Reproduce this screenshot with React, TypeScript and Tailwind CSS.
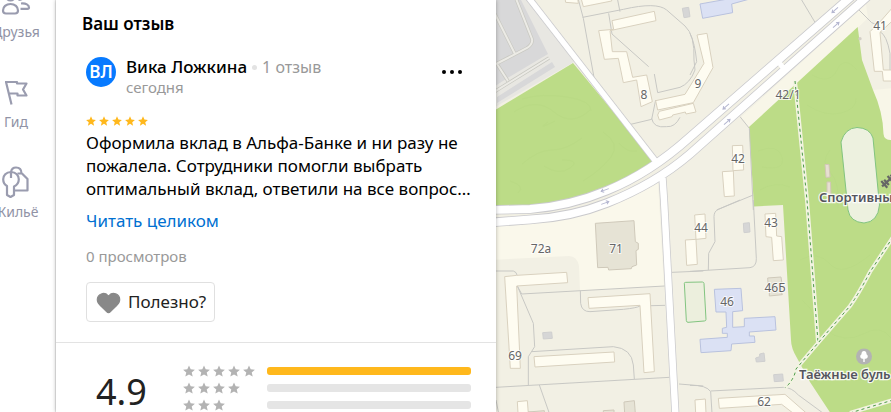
import { Heart } from "lucide-react";
import type { ReactNode } from "react";

const STAR = "M6 0.4 7.7 4.3 11.9 4.7 8.7 7.5 9.7 11.6 6 9.4 2.3 11.6 3.3 7.5 0.1 4.7 4.3 4.3Z";

function Star({ className }: { className: string }) {
  return (
    <svg viewBox="0 0 12 12" className={className} fill="currentColor" aria-hidden="true">
      <path d={STAR} />
    </svg>
  );
}

function NavItem({ label, children }: { label: string; children: ReactNode }) {
  return (
    <a href="#" className="flex h-[90px] w-8 flex-col items-center gap-1 whitespace-nowrap text-[#9a9caf]">
      <svg viewBox="0 0 32 32" className="size-8 shrink-0" fill="none" stroke="currentColor" strokeWidth="2.200" strokeLinejoin="round" aria-hidden="true">
        {children}
      </svg>
      <span className="text-sm leading-5 text-[#9193a6]">{label}</span>
    </a>
  );
}

function Sidebar() {
  return (
    <nav className="h-full w-14 shrink-0 overflow-hidden border-r border-[#ebebeb] bg-white">
      <div className="-mt-[14px]">
        <NavItem label="Друзья">
          <circle cx="10.500" cy="10" r="4.500" />
          <path d="M3 24.500C3 21 6 18 10.500 18S18 21 18 24.500C18 26.500 17 27.500 15 27.500H6C4 27.500 3 26.500 3 24.500Z" />
          <path d="M18 6C24 5 26 14 18.500 14M21 17.500C26 17 29 19 29 21.500 29 22.500 28.500 22.800 27.500 22.800H20.500" />
        </NavItem>
        <NavItem label="Гид">
          <path d="M5 6H17V7.500H26.500L23 13.500 26.500 19.500H17.500V17.500H8.500M6 6 11.500 28.500" />
        </NavItem>
        <NavItem label="Жильё">
          <path d="M11 6C6 6 3.200 9.500 3.200 13.200 3.200 16 4.500 18.500 7 20V29L10.500 31 14 29V20.500C17 19 18.800 16.500 18.800 13.200 18.800 9.500 16 6 11 6Z" />
          <path d="M11 6V12" />
          <path d="M11 6C11.500 3 13.500 1.500 16 1.500 19.500 1.500 21.500 4 21.500 7.500M17.500 7.500H22L27.500 13V24.500H15" />
        </NavItem>
      </div>
    </nav>
  );
}

function Review() {
  return (
    <article className="px-[30px] pt-[13px]">
      <header className="flex items-start">
        <div className="mt-2 flex size-[30px] shrink-0 items-center justify-center rounded-full bg-[#077aff] text-[17px] font-semibold text-white">
          ВЛ
        </div>
        <div className="ml-[10px] mt-2 flex-1">
          <div className="flex items-center text-[17px] leading-5">
            <a href="#" className="font-medium text-black">Вика Ложкина</a>
            <span className="mx-[5px] size-[5px] rounded-full bg-[#e3e3e3]" />
            <span className="text-base leading-5 text-[#999]">1 отзыв</span>
          </div>
          <p className="text-[15px] leading-5 text-[#999]">сегодня</p>
        </div>
        <button type="button" aria-label="Действия" className="mr-1 mt-5 flex gap-1 py-[1px]">
          <span className="size-1 rounded-full bg-black" />
          <span className="size-1 rounded-full bg-black" />
          <span className="size-1 rounded-full bg-black" />
        </button>
      </header>
      <div className="mt-[19px] flex gap-[3px] text-[#ffb81c]">
        {[1, 2, 3, 4, 5].map((n) => (
          <Star key={n} className="size-[10px]" />
        ))}
      </div>
      <p className="mt-[5px] whitespace-nowrap text-[17px] leading-[23px] text-black">
        Оформила вклад в Альфа-Банке и ни разу не
        <br />
        пожалела. Сотрудники помогли выбрать
        <br />
        оптимальный вклад, ответили на все вопрос…
      </p>
      <a href="#" className="mt-[9px] block text-[17px] leading-[23px] text-[#0070d1]">Читать целиком</a>
      <p className="mt-[14px] text-[15px] leading-5 text-[#999]">0 просмотров</p>
      <button type="button" className="mt-4 flex h-10 items-center gap-[6px] rounded-[4px] border border-[#e0e0e0] px-2 text-[17px] text-[#222]">
        <Heart className="size-[27px] fill-[#888] text-[#888]" strokeWidth={1} />
        Полезно?
      </button>
    </article>
  );
}

function Rating() {
  const rows = [
    { stars: 5, bar: "bg-[#ffb81c]" },
    { stars: 4, bar: "bg-[#e5e5e5]" },
    { stars: 3, bar: "bg-[#e5e5e5]" },
  ];
  return (
    <section className="mt-5 flex border-t border-[#e3e3e3] pl-10 pr-[25px] pt-[19px]">
      <p className="w-[87px] pt-[10px] text-[36px] leading-10 text-[#222]">4.9</p>
      <ul className="flex-1">
        {rows.map((row) => (
          <li key={row.stars} className="flex h-[17px] items-center">
            <span className="flex w-[84px] gap-[3px] text-[#b3b3b3]">
              {Array.from({ length: row.stars }, (_, i) => (
                <Star key={i} className="size-3" />
              ))}
            </span>
            <span className={`h-2 flex-1 rounded-[3px] ${row.bar}`} />
          </li>
        ))}
      </ul>
    </section>
  );
}

const house = "fill-[#fefcf1] stroke-[#d9d1bf]";
const school = "fill-[#dbe1f4] stroke-[#b9c2de]";
const shed = "fill-[#d6d6d6] stroke-[#cfcfcf]";
const line = "fill-none stroke-[#c8c8c4]";
const UPPER = "M490 210 L530 209 Q570 206 607 190.500 Q650 173 690 137 L853 -5";
const LOWER = "M490 222.500 L530 219.500 Q572 217 607 203 Q655 184 690 154 L869 -5";
const LANE = "M528 -3 L657 163";
const STREET = "M662.500 178 L664 200 L675.500 416";
const AISLES = "M515 -4 L532 39 Q533 44 527 48 L496 64 M495 14 L515 54 M497 64 L508 81 M494 92 L549 58";
const PATHS = ["M795 81 L807 200 L818 342", "M893 237 L870 272 Q858 295 850 306 L818 343 L796 369 Q794 380 785 388", "M850 413 L893 400"];

function Tile({ x, y, children }: { x: number; y: number; children: ReactNode }) {
  return (
    <g transform={`translate(${x} ${y}) scale(.33333)`} strokeWidth="3" strokeLinejoin="round">
      {children}
    </g>
  );
}

function Arrow({ x, y, turn }: { x: number; y: number; turn: number }) {
  return <path d="M-4 0H4M1.500 -1.800 4 0 1.500 1.800" transform={`translate(${x} ${y}) rotate(${turn})`} className="fill-none stroke-[#b4b6d0]" strokeWidth="1" />;
}

const numbers: [string, number, number][] = [
  ["8", 644, 99], ["9", 698, 88], ["41", 880, 30], ["42/1", 788, 99], ["42", 738, 163],
  ["72а", 541, 253], ["71", 616, 253], ["69", 515, 360], ["44", 701, 232], ["43", 771, 227],
  ["46Б", 775, 292], ["46", 727, 306], ["62", 764, 406],
];

function CityMap() {
  return (
    <svg viewBox="496 0 395 412" preserveAspectRatio="xMinYMin slice" className="h-full w-full" role="img" aria-label="Карта">
      <rect x="490" width="420" height="420" fill="#f2f0e4" />
      {/* light strips beside the avenue */}
      <path d="M490 225 L560 218 L658 182 L664 286 L580 291 L579 266 Q577 256 569 256 L490 260Z" fill="#faf8eb" />
      <path d="M741 117 L866 4 L868 18 L798 85 L749 127Z M873 90 L895 88 V142 L884 138Z" fill="#f8f6e8" />

      {/* parks */}
      <g fill="#bcdc87">
        <path d="M490 113 L573 63 L654 161 Q610 196 560 204 L490 207Z" />
        <path d="M857.700 27 L862 60 L873 90 Q883 112 883.500 134 Q884 140 891 140 H900 V420 H835 L810 382 L797 358 Q791 348 791 340 L783 205 L754 206.500 L749 127Z" />
      </g>
      <g className="fill-none stroke-[#b5d780]" strokeWidth="1" opacity=".35">
        <path d="M522 99q20-6 45-2t24 14M514 112q22-15 40 0t36-2M555 121q-20 10-7 1M582 138q-16 12-30 12t-30 14M562 160q19 0 8 8t-26-2M603 132q18 12 8 25t-28 24M510 181q16 5 8 12M619 143q8 10 18 8" />
        <path d="M758 151q20-8 24 6t-20 10M812 75q18 10 25-5t20 0M807 105q18 12 34 8t15-15M830 150q-10 12 0 22t8 36M760 190q15-9 30-3M800 260q18-10 30 4t40-9M825 330q20 14 38 4t28 4M802 300q18 16 14 30M860 370q10 12 31 7" />
      </g>

      {/* parking lot */}
      <path d="M490 -2 H527 L574 62 L490 110Z" fill="#e8e7e2" />
      <path d="M490 0 H521 L548 54 L506 79 L492 88Z M497 97 L552 62 L555 67 L497 103Z" fill="#d8d8d9" />
      <path d={AISLES} className="fill-none stroke-[#c9c9c2]" strokeWidth="3.400" />
      <path d={AISLES} className="fill-none stroke-[#ecebe6]" strokeWidth="2" />

      {/* yard driveways */}
      <Tile x={490} y={0}>
        <path className={line} d="M263-9 280 55 312 232M278 52 400 28Q500 5 530 30L585 78Q615 105 612 180L615 210Q600 250 570 262L503 278 493 222M356 40 366 102 476 200M383 0 390 35M422 373 485 358 497 300M485 355Q490 385 530 380 555 382 570 352" />
      </Tile>
      <Tile x={690} y={0}>
        <path className={line} d="M335 0 375 67M0 100Q15 130 20 185L0 225M150 350 178 385 190 630M80 630 190 585M505 28 545 68 570 78M570 95Q590 105 600 160V215" />
      </Tile>
      <Tile x={490} y={200}>
        <path className={line} d="M18 213H70Q80 215 82 228V258L130 370 134 440 115 470V555M82 258 95 282 524 258M271 272 272 310Q275 335 300 335L400 328Q440 324 450 318L525 316M125 455 370 440Q425 445 430 495L433 537M18 562 538 532M148 555 178 640M546 217 640 213M567 552 640 558M18 600 26 640" />
      </Tile>
      <Tile x={690} y={200}>
        <path className={line} d="M190 0 199 175Q200 200 180 203L0 214M150 0 85 28Q72 34 72 50L75 125 56 160 55 210M0 556Q50 555 62 575L66 640M62 573 280 562Q305 562 325 585L400 640" />
      </Tile>

      {/* buildings */}
      <Tile x={490} y={0}>
        <path className={house} d="M225-6 227 7 265 10 263-6ZM273-6 280 20 365 3V-6Z" />
        <path className={house} d="M371 88 366 62 493 34 498 62 360 92 367 155 410 155 428 232 470 225 487 305 453 320 440 240 400 248 385 175 343 178 326 92Z" />
        <path className={house} d="M497 302 585 283 642 190 621 105 651 100 669 203 610 308 503 330ZM508 334 610 310 618 336 588 342 586 336 548 345 546 350 508 360 503 345Z" />
        <path className={shed} d="M577 25 596 22 600 50 582 53Z" />
      </Tile>
      <Tile x={690} y={0}>
        <path className={school} d="M30 12 130-6H190L125 12 128 38 38 55Z" />
        <path className={house} d="M540 95 575 60 610 20V60L570 97 580 210H610V243H580L577 214H553Z" />
        <path className={house} d="M127 437 158 436 161 510 129 512ZM97 515 130 513 133 588 103 590Z" />
        <circle cx="510" cy="116" r="5" fill="#d3cfc6" />
      </Tile>
      <Tile x={490} y={200}>
        <path className="fill-[#e6e3d5] stroke-[#cfc9ba]" d="M316 70 432 62 436 125 445 130V148L438 152 440 195 426 200 424 206 356 210 354 202 323 203Z" />
        <path className={house} d="M44 230 80 226 230 217 233 248 80 258 91 505H61ZM294 293 480 281 493 515 462 518 450 316 297 325ZM132 470 372 456 374 486 135 501ZM82 605 112 602 115 640H84Z" />
        <path className={house} d="M586 120 618 118 622 193 590 196ZM614 45 645 42 648 115 618 118ZM617 600 645 598V640H618Z" />
        <path className="fill-[#e6e3d5] stroke-[#cfc9ba]" d="M402 606 433 602 436 640H404ZM340 632 372 630V640H340ZM115 636 163 632V640Z" />
        <path className={shed} d="M158 398 185 396 187 415 160 417Z" />
        <path className="fill-[#ecefdd] stroke-[#82c47f]" d="M583 250Q583 247 587 247L637 246Q642 247 642 250L648 358Q648 363 643 363L594 367Q590 367 589 362Z" />
      </Tile>
      <Tile x={690} y={200}>
        <path className={house} d="M225 42 257 40 260 108 275 110 280 180 250 182 245 112 228 110ZM85 595 285 583 350 640H310L275 613 88 625ZM15 600 46 597 48 640H17Z" />
        <path className="fill-[#e6e3d5] stroke-[#cfc9ba]" d="M233 234 273 231 275 245 272 270 277 284 238 288V272L235 262Z" />
        <path className={school} d="M73 268 153 265 158 332 128 335V382L163 380V355L255 350 258 390 178 396V408H193L195 427 125 432 123 452 33 458 30 418 112 412V400H97V385L110 382 108 336 78 336Z" />
        <path className={shed} d="M160 70 178 68 180 96 162 98ZM197 474 209 470V462L222 459 225 484 199 486ZM251 524 278 522 280 543 253 545Z" />
      </Tile>

      {/* stadium and stands */}
      <path d="M841 142 Q845 128 857 127.500 Q870 128 873 138 L879.500 205 Q878 222 864 223 Q850 222 848 210Z" className="fill-[#edf1df] stroke-[#82c47f]" />
      <path className="fill-[#e7dfd2] stroke-[#d2c7b6]" d="M825 164.500H829L830 177 826 177.500ZM827 182H830.500L831 197H827Z" />

      {/* park paths */}
      {PATHS.map((d) => (
        <g key={d} fill="none">
          <path d={d} stroke="#f2f3e1" strokeWidth="4" />
          <path d={d} stroke="#4a9a48" strokeWidth="1" strokeDasharray="3 3" />
        </g>
      ))}

      {/* roads */}
      <g fill="none">
        <path d={LANE} stroke="#cacacd" strokeWidth="7" />
        <path d={STREET} stroke="#cacacd" strokeWidth="8" />
        <path d={UPPER} stroke="#cacacd" strokeWidth="9.500" />
        <path d={LOWER} stroke="#cacacd" strokeWidth="9.500" />
        <path d={LANE} stroke="#fff" strokeWidth="5.500" />
        <path d={STREET} stroke="#fff" strokeWidth="6.500" />
        <path d={UPPER} stroke="#fff" strokeWidth="7.800" />
        <path d={LOWER} stroke="#fff" strokeWidth="7.800" />
        <path d="M777 60 L785 70" stroke="#fff" strokeWidth="5" />
      </g>
      <Arrow x={605} y={190} turn={160} />
      <Arrow x={605} y={203} turn={-20} />
      <Arrow x={726} y={106.500} turn={139} />
      <Arrow x={727} y={122} turn={-41} />
      <Arrow x={835} y={10} turn={139} />
      <Arrow x={836} y={25} turn={-41} />

      {/* points of interest */}
      <circle cx="864" cy="356.500" r="8" fill="#b3b3b3" />
      <path d="M864 351a3 3 0 0 1 2.500 3.200 2.500 2.500 0 0 1-.5 4.600h-1.300V362h-1.400v-3.200H862a2.500 2.500 0 0 1-.5-4.600A3 3 0 0 1 864 351Z" fill="#fff" />
      <g transform="translate(888 181) rotate(-42)" stroke="#666" strokeWidth="2.200" fill="none">
        <path d="M-8 0H8M-5-4.500V4.500M-2-3.500V3.500M3-4V4M6-3V3" />
      </g>

      <g className="font-['Noto_Sans','Open_Sans',sans-serif] text-[12px]" fill="#666" stroke="#fff" strokeWidth="2" strokeOpacity=".75" paintOrder="stroke" textAnchor="middle">
        {numbers.map(([label, x, y]) => (
          <text key={label} x={x} y={y}>{label}</text>
        ))}
      </g>
      <g className="font-['Noto_Sans','Open_Sans',sans-serif] text-[13px] font-semibold" fill="#55555e" stroke="#fff" strokeWidth="2.500" strokeOpacity=".85" paintOrder="stroke">
        <text x="819" y="202">Спортивны</text>
        <text x="799" y="379">Таёжные буль</text>
      </g>
    </svg>
  );
}

export default function App() {
  return (
    <div className="flex h-screen overflow-hidden bg-white font-['Noto_Sans','Open_Sans',sans-serif]">
      <Sidebar />
      <main className="z-10 w-[440px] shrink-0 overflow-hidden bg-white shadow-[0_0_4px_rgba(0,0,0,0.3)]">
        <h1 className="px-[26px] pt-3 text-[17px] font-semibold leading-6 text-black">Ваш отзыв</h1>
        <Review />
        <Rating />
      </main>
      <div className="min-w-0 flex-1">
        <CityMap />
      </div>
    </div>
  );
}
